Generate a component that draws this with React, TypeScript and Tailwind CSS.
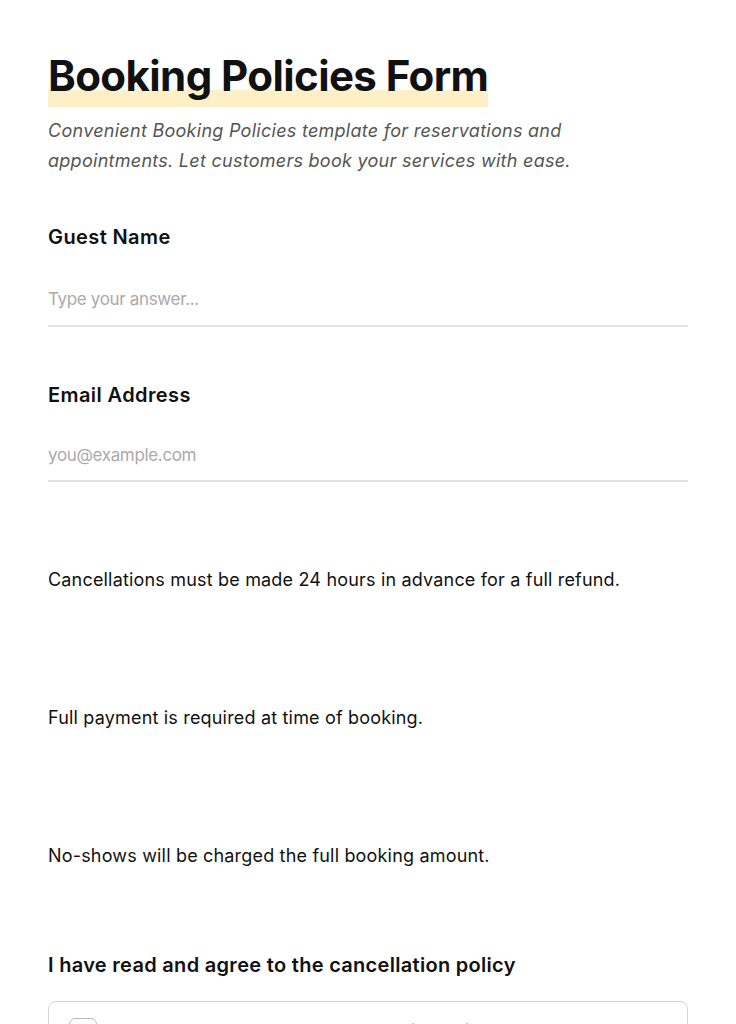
import React from 'react';

const font = { fontFamily: 'Inter, "Liberation Sans", sans-serif' };

export default function App() {
  return (
    <div className="min-h-screen bg-white text-[#111]" style={font}>
      <div className="px-12 pt-[50px]">
        {/* Heading */}
        <h1 className="inline-block pb-[5px] text-[42px] font-bold leading-[52px] tracking-[-0.014em] bg-[linear-gradient(transparent_70%,#fdf0c6_70%)]">
          Booking Policies Form
        </h1>
        <p className="mt-[9px] text-[18px] italic leading-[30px] text-[#555] tracking-[0.015em]">
          Convenient Booking Policies template for reservations and<br />
          appointments. Let customers book your services with ease.
        </p>

        {/* Guest name */}
        <div className="mt-[47px]">
          <label className="block text-[20px] font-semibold leading-7 tracking-[0.02em]">Guest Name</label>
          <input
            className="mt-[36px] w-full border-b-2 border-[#e2e2e2] pb-3 text-[17px] outline-none placeholder:text-[#aaa] tracking-[-0.02em]"
            placeholder="Type your answer..."
          />
        </div>

        {/* Email */}
        <div className="mt-[54px]">
          <label className="block text-[20px] font-semibold leading-7 tracking-[0.02em]">Email Address</label>
          <input
            className="mt-[34px] w-full border-b-2 border-[#e2e2e2] pb-3 text-[17px] outline-none placeholder:text-[#aaa] tracking-[-0.02em]"
            placeholder="you@example.com"
          />
        </div>

        {/* Policies */}
        <div className="mt-[84px] flex flex-col gap-[110px] text-[18px] leading-7 tracking-[0.01em]">
          <p>Cancellations must be made 24 hours in advance for a full refund.</p>
          <p>Full payment is required at time of booking.</p>
          <p>No-shows will be charged the full booking amount.</p>
        </div>

        {/* Agreement */}
        <div className="mt-[81px]">
          <label className="block text-[20px] font-semibold leading-7 tracking-[0.015em]">
            I have read and agree to the cancellation policy
          </label>
          <div className="mt-[22px] flex items-center gap-3 rounded-lg border border-[#d4d4d4] px-5 py-4">
            <span className="h-7 w-7 shrink-0 rounded-md border border-[#bbb]" />
            <span className="text-[17px] text-[#666]">I have read and agree to the cancellation policy</span>
          </div>
        </div>
      </div>
    </div>
  );
}
